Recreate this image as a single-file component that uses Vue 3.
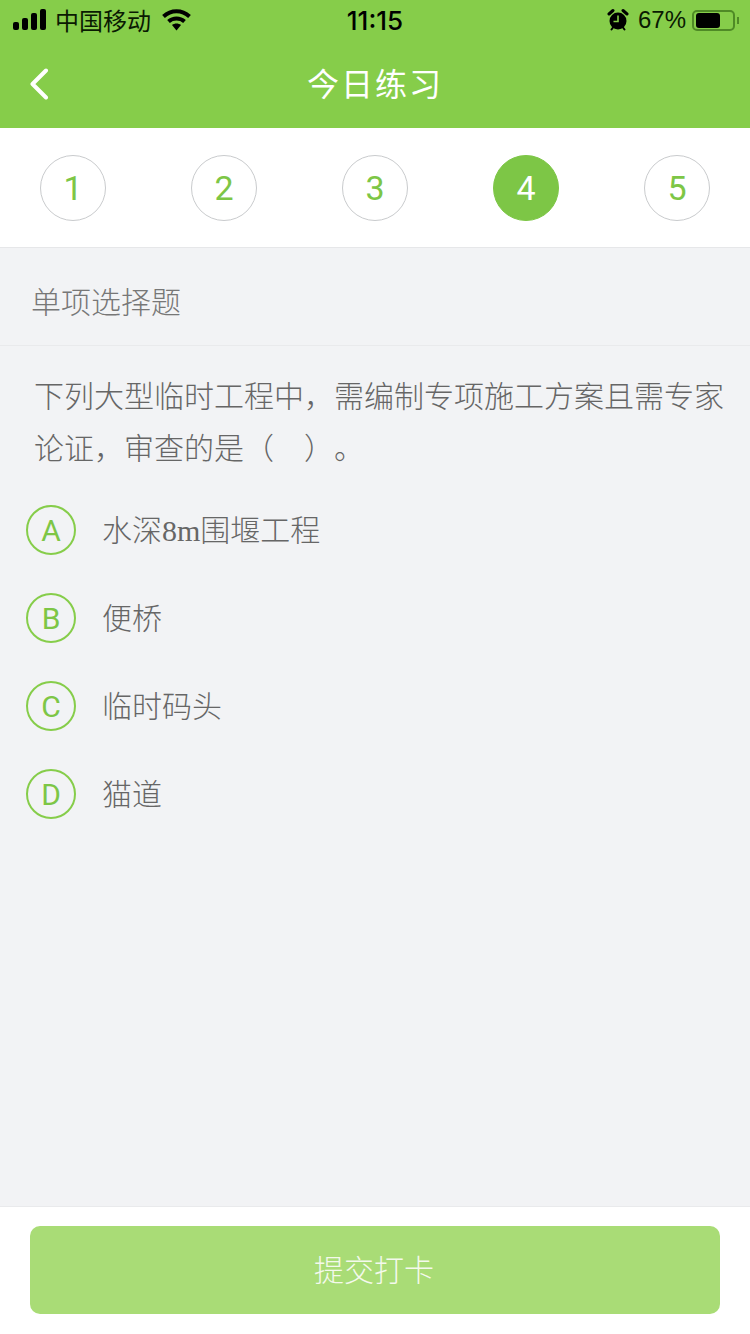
<script setup>
const steps = [1, 2, 3, 4, 5]
const options = [
  { key: 'A', text: '水深', num: '8m', rest: '围堰工程' },
  { key: 'B', text: '便桥' },
  { key: 'C', text: '临时码头' },
  { key: 'D', text: '猫道' },
]
</script>

<template>
  <div class="page">
    <header class="top">
      <div class="status">
        <div class="left">
          <svg class="signal" width="33" height="22" viewBox="0 0 33 22">
            <rect x="0" y="13" width="6" height="8" rx="2" />
            <rect x="9" y="9" width="6" height="12" rx="2" />
            <rect x="18" y="4" width="6" height="17" rx="2" />
            <rect x="27" y="0" width="6" height="21" rx="2" />
          </svg>
          <span class="carrier">中国移动</span>
          <svg class="wifi" width="29" height="22" viewBox="0 0 29 22">
            <path d="M1.5 7.5 C9 0.5 20 0.5 27.5 7.5" />
            <path d="M6.5 12.5 C11 8.5 18 8.5 22.5 12.5" />
            <path class="fill" d="M10 16 C12.5 14 16.5 14 19 16 L14.5 21.5 Z" />
          </svg>
        </div>
        <span class="time">11:15</span>
        <div class="right">
          <svg width="22" height="24" viewBox="0 0 22 24">
            <circle cx="11" cy="13" r="8.5" fill="#000" />
            <path d="M2 6 L6 2.5 M20 6 L16 2.5" stroke="#000" stroke-width="3" stroke-linecap="round" />
            <path d="M4.5 21.5 L6 19.5 M17.5 21.5 L16 19.5" stroke="#000" stroke-width="2" stroke-linecap="round" />
            <path d="M11 7.5 V13.5 H6.5" stroke="#86cd4a" stroke-width="1.6" fill="none" />
          </svg>
          <span class="pct">67%</span>
          <div class="battery"><div class="level"></div></div>
          <div class="cap"></div>
        </div>
      </div>
      <div class="nav">
        <svg class="back" width="20" height="32" viewBox="0 0 20 32">
          <path d="M17 2.5 L3.5 16 L17 29.5" />
        </svg>
        <h1>今日练习</h1>
      </div>
    </header>

    <div class="steps">
      <div v-for="s in steps" :key="s" class="step" :class="{ on: s === 4 }">{{ s }}</div>
    </div>

    <div class="type">单项选择题</div>

    <main class="body">
      <p class="question">下列大型临时工程中，需编制专项施工方案且需专家论证，审查的是（　）。</p>
      <ul class="options">
        <li v-for="o in options" :key="o.key" class="option">
          <span class="badge">{{ o.key }}</span>
          <span class="label">{{ o.text }}<span v-if="o.num" class="num">{{ o.num }}</span>{{ o.rest }}</span>
        </li>
      </ul>
    </main>

    <footer class="foot">
      <button class="submit">提交打卡</button>
    </footer>
  </div>
</template>

<style>
html, body { margin: 0; background: #f2f3f5; }
</style>

<style scoped>
.page {
  width: 750px;
  height: 1334px;
  display: flex;
  flex-direction: column;
  background: #f2f3f5;
  font-family: "Noto Sans CJK SC", "Liberation Sans", sans-serif;
  overflow: hidden;
}
.top { background: #86cd4a; height: 128px; }
.status {
  height: 40px;
  display: flex;
  align-items: center;
  justify-content: space-between;
  padding: 0 13px;
  position: relative;
  color: #0a1a02;
}
.left, .right { display: flex; align-items: center; }
.signal { fill: #000; }
.carrier { font-size: 24px; margin-left: 9px; line-height: 40px; }
.wifi { margin-left: 11px; }
.wifi path { fill: none; stroke: #000; stroke-width: 4; }
.wifi .fill { fill: #000; stroke: none; }
.time {
  position: absolute;
  left: 0;
  right: 0;
  text-align: center;
  font: 500 26px "Inter", "Liberation Sans", sans-serif;
  color: #000;
}
.right { margin-right: -2px; }
.pct { font: 400 24px "Liberation Sans", sans-serif; margin-left: 9px; color: #0a1a02; }
.battery {
  width: 35px;
  height: 15px;
  border: 2px solid #4f8a26;
  border-radius: 5px;
  margin-left: 6px;
  padding: 1px 2px;
  box-sizing: content-box;
}
.level { width: 24px; height: 15px; background: #000; border-radius: 3px; }
.cap { width: 2px; height: 7px; background: #4f8a26; margin-left: 2px; }
.nav { height: 88px; position: relative; display: flex; align-items: center; justify-content: center; }
.nav h1 { margin: 0; font-size: 32px; font-weight: 400; color: #fff; letter-spacing: 2px; position: relative; top: -2px; }
.back { position: absolute; left: 29px; top: 28px; }
.back path { fill: none; stroke: #fff; stroke-width: 4; stroke-linecap: round; stroke-linejoin: round; }
.steps {
  height: 119px;
  background: #fff;
  border-bottom: 1px solid #e6e7e9;
  display: flex;
  align-items: center;
  justify-content: space-between;
  padding: 0 40px;
}
.step {
  width: 64px;
  height: 64px;
  border: 1px solid #c9cbcd;
  border-radius: 50%;
  display: flex;
  align-items: center;
  justify-content: center;
  font: 400 34px "Roboto", "Liberation Sans", sans-serif;
  color: #7dc646;
  background: #fff;
}
.step.on { background: #7dc646; border-color: #7dc646; color: #fff; }
.type {
  box-sizing: border-box;
  height: 98px;
  padding-left: 31px;
  font-size: 30px;
  font-weight: 300;
  color: #777;
  border-bottom: 1px solid #e9eaec;
  line-height: 104px;
}
.body { flex: 1; min-height: 0; }
.question {
  margin: 22px 0 0;
  padding: 0 21px 0 34px;
  font-size: 30px;
  font-weight: 300;
  line-height: 52px;
  color: #666;
  text-spacing-trim: space-all;
}
.options { list-style: none; margin: 14px 0 0; padding: 0 0 0 26px; }
.option { height: 88px; display: flex; align-items: center; }
.badge {
  width: 46px;
  height: 46px;
  border: 2px solid #86cd4a;
  border-radius: 50%;
  display: flex;
  align-items: center;
  justify-content: center;
  font: 400 30px "Roboto", "Liberation Sans", sans-serif;
  color: #7dc646;
}
.label { margin-left: 26px; margin-bottom: 4px; font-size: 30px; font-weight: 300; color: #666; }
.num { font-family: "Liberation Serif", serif; }
.foot {
  height: 128px;
  box-sizing: border-box;
  background: #fff;
  border-top: 1px solid #e9eaec;
  padding: 19px 30px 0;
}
.submit {
  display: block;
  width: 690px;
  height: 88px;
  border: 0;
  border-radius: 10px;
  padding: 0 2px 4px 0;
  background: #a9dc76;
  color: #f4f9ec;
  font: 300 30px "Noto Sans CJK SC", sans-serif;
}
</style>
